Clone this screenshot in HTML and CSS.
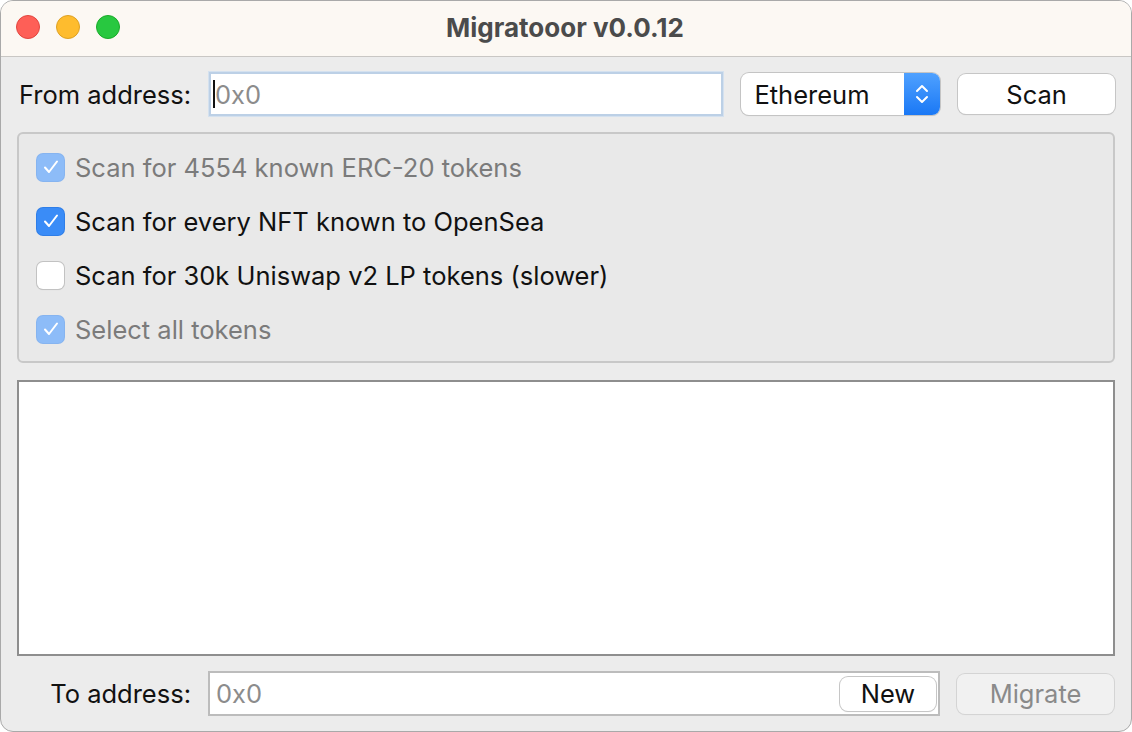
FILE: index.html
```html
<!DOCTYPE html>
<html>
<head>
<meta charset="utf-8">
<link rel="stylesheet" href="styles.css">
</head>
<body>
<div class="window">
  <div class="titlebar">
    <div class="lights">
      <span class="light red"></span>
      <span class="light yellow"></span>
      <span class="light green"></span>
    </div>
    <div class="title">Migratooor v0.0.12</div>
  </div>
  <div class="content">
    <div class="row top-row">
      <label class="label from-label">From address:</label>
      <div class="input focused"><span class="caret"></span><span class="placeholder">0x0</span></div>
      <div class="popup">
        <span class="popup-text">Ethereum</span>
        <span class="stepper">
          <svg width="18" height="24" viewBox="0 0 18 24"><path d="M4 9 L9 4 L14 9 M4 15 L9 20 L14 15" fill="none" stroke="#fff" stroke-width="2" stroke-linecap="round" stroke-linejoin="round"/></svg>
        </span>
      </div>
      <div class="button scan">Scan</div>
    </div>
    <div class="group">
      <div class="check-row disabled">
        <span class="box checked dim"><svg width="18" height="16" viewBox="0 0 18 16"><path d="M3 8.5 L7 13 L15 2.5" fill="none" stroke="#fff" stroke-width="2" stroke-linecap="round" stroke-linejoin="round"/></svg></span>
        <span class="check-label">Scan for 4554 known ERC-20 tokens</span>
      </div>
      <div class="check-row">
        <span class="box checked"><svg width="18" height="16" viewBox="0 0 18 16"><path d="M3 8.5 L7 13 L15 2.5" fill="none" stroke="#fff" stroke-width="2" stroke-linecap="round" stroke-linejoin="round"/></svg></span>
        <span class="check-label">Scan for every NFT known to OpenSea</span>
      </div>
      <div class="check-row">
        <span class="box"></span>
        <span class="check-label">Scan for 30k Uniswap v2 LP tokens (slower)</span>
      </div>
      <div class="check-row disabled">
        <span class="box checked dim"><svg width="18" height="16" viewBox="0 0 18 16"><path d="M3 8.5 L7 13 L15 2.5" fill="none" stroke="#fff" stroke-width="2" stroke-linecap="round" stroke-linejoin="round"/></svg></span>
        <span class="check-label">Select all tokens</span>
      </div>
    </div>
    <div class="list"></div>
    <div class="row bottom-row">
      <label class="label to-label">To address:</label>
      <div class="input plain">
        <span class="placeholder">0x0</span>
        <div class="button new">New</div>
      </div>
      <div class="button migrate">Migrate</div>
    </div>
  </div>
</div>
</body>
</html>
```
FILE: styles.css
```css
* { box-sizing: border-box; }
html, body {
  margin: 0;
  padding: 0;
  width: 1132px;
  height: 732px;
  background: #ffffff;
  overflow: hidden;
}
body {
  font-family: Inter, "Noto Sans", "Liberation Sans", sans-serif;
  font-size: 25.5px;
  color: #1a1a1a;
}
.window {
  width: 1132px;
  height: 732px;
  border: 1px solid #a9a9a9;
  border-radius: 13px;
  overflow: hidden;
  background: #ececec;
  display: flex;
  flex-direction: column;
}
.titlebar {
  height: 56px;
  flex: none;
  background: #fcf8f3;
  border-bottom: 1px solid #c9c7c4;
  position: relative;
  display: flex;
  align-items: center;
  justify-content: center;
}
.lights {
  position: absolute;
  left: 15px;
  top: 14px;
  display: flex;
  gap: 16px;
}
.light {
  width: 24px;
  height: 24px;
  border-radius: 50%;
  display: block;
}
.red { background: #fe5f57; border: 1px solid #e2463f; }
.yellow { background: #febc2e; border: 1px solid #dea123; }
.green { background: #28c840; border: 1px solid #1aab29; }
.title {
  font-weight: 700;
  font-size: 26px;
  color: #4b4b4b;
  margin-left: -2px;
  margin-top: -2px;
}
.content {
  flex: 1;
  padding: 15px 16px 14px 16px;
  display: flex;
  flex-direction: column;
}
.row {
  display: flex;
  align-items: center;
}
.top-row {
  height: 44px;
}
.label {
  color: #111;
  flex: none;
}
.from-label {
  margin-left: 2px;
  width: 190px;
}
.input {
  background: #fff;
  height: 44px;
  display: flex;
  align-items: center;
  position: relative;
}
.input.focused {
  width: 515px;
  border: 2px solid #bcd0e6;
  box-shadow: 0 0 0 1px #d4e1ef;
  padding-left: 2px;
}
.caret {
  width: 2px;
  height: 28px;
  background: #111;
  display: block;
}
.placeholder {
  color: #8c8c8c;
}
.popup {
  margin-left: 18px;
  width: 199px;
  height: 42px;
  border-radius: 8px;
  background: #fff;
  box-shadow: 0 0 0 1px #c4c4c4, 0 1px 1px rgba(0,0,0,0.15);
  display: flex;
  align-items: center;
  overflow: hidden;
}
.popup-text {
  flex: 1;
  padding-left: 13px;
  color: #111;
}
.stepper {
  width: 36px;
  height: 42px;
  background: linear-gradient(#4fa1ff, #1a78f5);
  display: flex;
  align-items: center;
  justify-content: center;
}
.button {
  background: #fff;
  border-radius: 8px;
  box-shadow: 0 0 0 1px #c6c6c6, 0 1px 1px rgba(0,0,0,0.18);
  display: flex;
  align-items: center;
  justify-content: center;
  color: #111;
}
.scan {
  margin-left: 18px;
  width: 157px;
  height: 40px;
}
.group {
  margin-top: 16px;
  height: 231px;
  border: 2px solid #c8c8c8;
  border-radius: 6px;
  background: #e9e9e9;
  padding: 19px 0 0 18px;
  display: flex;
  flex-direction: column;
  gap: 26px;
}
.check-row {
  display: flex;
  align-items: center;
  height: 28px;
}
.box {
  width: 27px;
  height: 27px;
  border-radius: 6px;
  background: #fff;
  box-shadow: 0 0 0 1px #c2c2c2, 0 1px 1px rgba(0,0,0,0.15);
  display: flex;
  align-items: center;
  justify-content: center;
  flex: none;
}
.box.checked {
  background: #3a8cf7;
  box-shadow: 0 0 0 1px #2f7ee8;
}
.box.checked.dim {
  background: #8dbcf8;
  box-shadow: 0 0 0 1px #86b4f0;
}
.check-label {
  margin-left: 11px;
  color: #111;
}
.check-row.disabled .check-label {
  color: #7b7b7b;
}
.list {
  margin-top: 17px;
  height: 276px;
  background: #fff;
  border: 2px solid #8e8e8e;
}
.bottom-row {
  margin-top: 15px;
  height: 45px;
}
.to-label {
  width: 191px;
  text-align: right;
  padding-right: 17px;
}
.input.plain {
  width: 732px;
  height: 45px;
  border: 2px solid #bcbcbc;
  padding-left: 6px;
  justify-content: space-between;
  padding-right: 2px;
}
.new {
  width: 96px;
  height: 34px;
}
.migrate {
  margin-left: 17px;
  width: 157px;
  height: 40px;
  background: #f1f1f1;
  color: #8a8a8a;
  box-shadow: 0 0 0 1px #d4d4d4, 0 1px 1px rgba(0,0,0,0.08);
}
```
